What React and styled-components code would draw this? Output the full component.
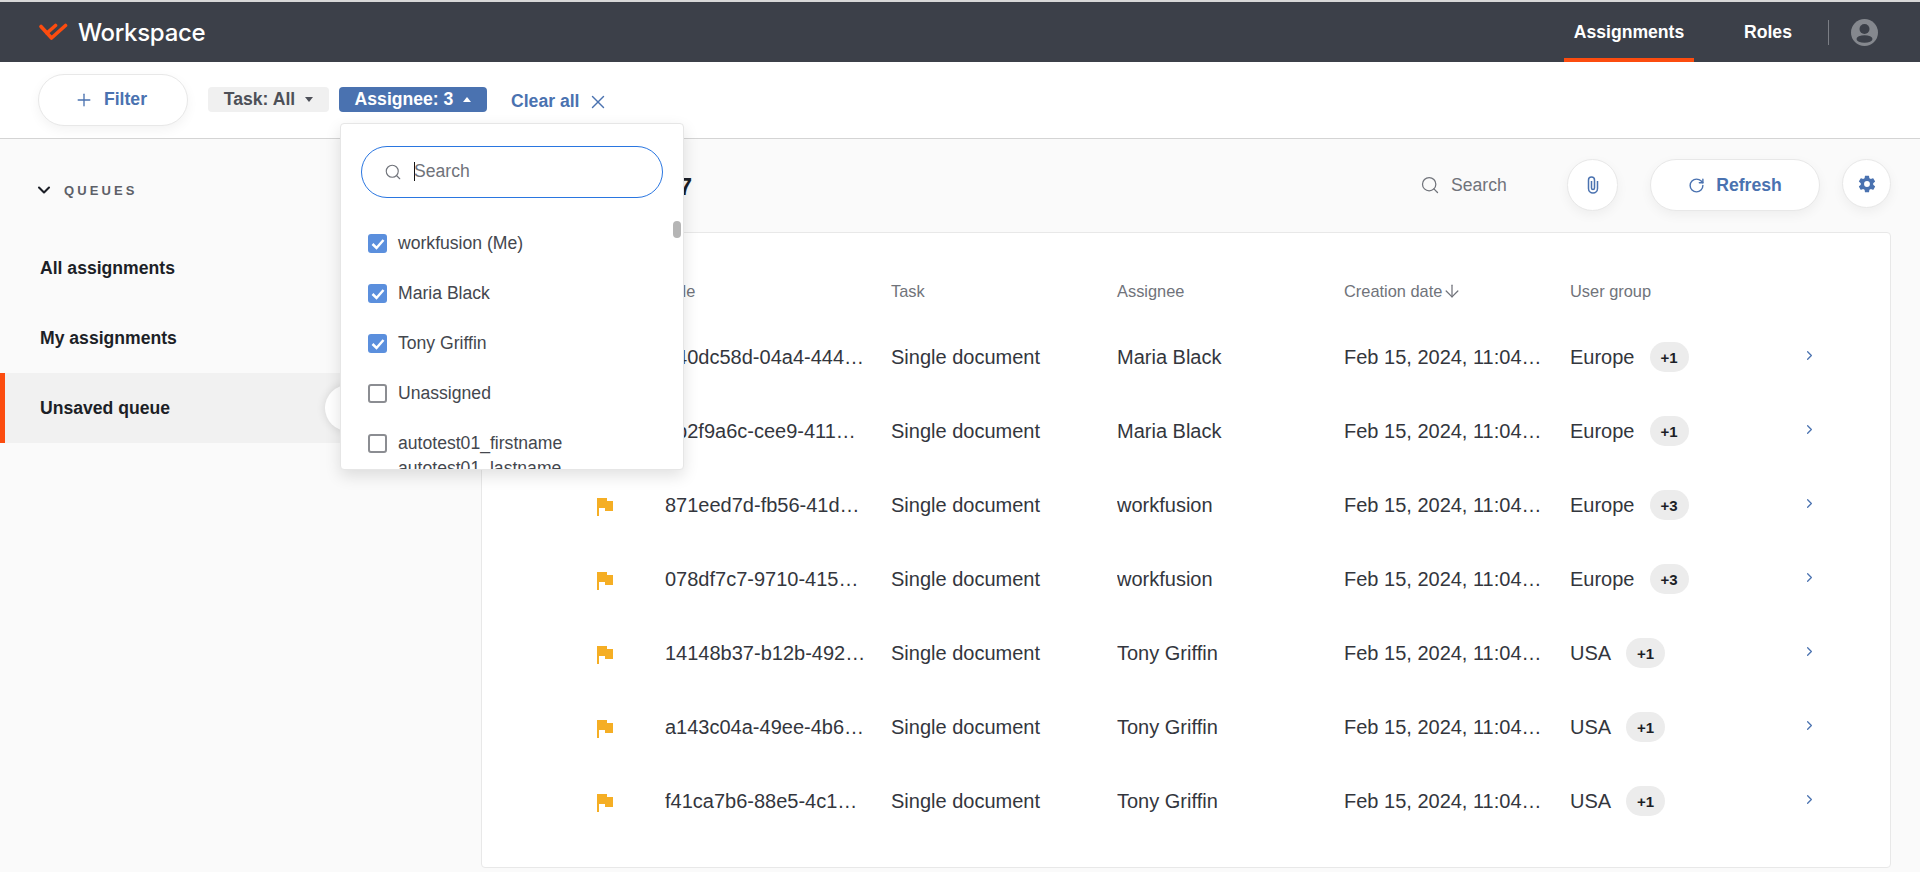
import React from 'react';
import styled, { createGlobalStyle } from 'styled-components';
import { Plus, X, Search, ChevronDown, ChevronRight, RotateCw, ArrowDown } from 'lucide-react';

const GlobalStyle = createGlobalStyle`
  html, body { margin: 0; padding: 0; height: 100%; background: #fafafa; overflow: hidden; }
  * { box-sizing: border-box; }
  body { font-family: "Liberation Sans", Arial, sans-serif; color: #24272e; }
`;

const Page = styled.div`
  position: relative;
  width: 1920px;
  height: 872px;
  display: flex;
  flex-direction: column;
  overflow: hidden;
`;

const TopStrip = styled.div`
  height: 2px;
  background: #d8d8d8;
`;

const Header = styled.header`
  height: 60px;
  background: #3c4049;
  display: flex;
  align-items: stretch;
  justify-content: space-between;
  padding: 0 42px 0 38px;
`;

const Brand = styled.div`
  display: flex;
  align-items: center;
  gap: 10px;
  color: #fff;
  font-family: Inter, "Noto Sans", sans-serif;
  font-size: 24px;
  font-weight: 500;
  letter-spacing: -0.3px;
`;

const HeaderNav = styled.nav`
  display: flex;
  align-items: stretch;
`;

const NavLink = styled.a`
  display: flex;
  align-items: center;
  justify-content: center;
  width: ${p => p.$width}px;
  margin-right: ${p => p.$gap || 0}px;
  color: #fff;
  font-size: 17.6px;
  font-weight: 700;
  box-shadow: ${p => (p.$active ? 'inset 0 -4px 0 #fc4c0f' : 'none')};
`;

const NavDivider = styled.span`
  width: 1px;
  height: 25px;
  margin: 18px 22px 0 0;
  background: #7b7e85;
`;

const Avatar = styled.div`
  display: flex;
  align-items: center;
`;

const FilterBar = styled.div`
  height: 77px;
  flex-shrink: 0;
  background: #fff;
  border-bottom: 1px solid #d4d4d4;
  display: flex;
  align-items: center;
  padding: 0 0 1px 38px;
`;

const RoundButton = styled.button`
  display: flex;
  align-items: center;
  justify-content: center;
  flex-shrink: 0;
  gap: ${p => p.$gap || 0}px;
  width: ${p => p.$width}px;
  height: ${p => p.$height || 52}px;
  padding: 0;
  background: #fff;
  border: 1px solid #e8e8e8;
  border-radius: 26px;
  box-shadow: 0 4px 12px rgba(0, 0, 0, 0.05);
  color: #4a72b0;
  font: 700 17.6px "Liberation Sans", Arial, sans-serif;
`;

const FilterButton = styled(RoundButton)`
  padding-right: 5px;
  margin-right: 20px;
`;

const Chip = styled.button`
  display: flex;
  align-items: center;
  justify-content: center;
  gap: 10px;
  width: ${p => p.$width}px;
  height: 25px;
  margin-right: 10px;
  padding: 0;
  border: 0;
  border-radius: 4px;
  background: ${p => (p.$active ? '#4a72b0' : '#f0f0f0')};
  color: ${p => (p.$active ? '#fff' : '#4d5058')};
  font: 700 17.6px "Liberation Sans", Arial, sans-serif;
`;

const Caret = styled.span`
  width: 0;
  height: 0;
  border-left: 4.5px solid transparent;
  border-right: 4.5px solid transparent;
  ${p => (p.$up ? 'border-bottom: 5px solid currentColor;' : 'border-top: 5px solid currentColor;')}
`;

const ClearAll = styled.a`
  display: flex;
  align-items: center;
  gap: 8px;
  margin: 4px 0 0 14px;
  color: #4a72b0;
  font-size: 17.6px;
  font-weight: 700;
`;

const Body = styled.div`
  flex: 1;
  display: flex;
  min-height: 0;
`;

const Sidebar = styled.aside`
  width: 340px;
  flex-shrink: 0;
  padding-top: 42px;
`;

const QueuesTitle = styled.div`
  display: flex;
  align-items: center;
  gap: 10px;
  height: 18px;
  padding-left: 34px;
  color: #5d6068;
  font-size: 13px;
  font-weight: 700;
  letter-spacing: 3.1px;
`;

const QueueList = styled.div`
  margin-top: 34px;
`;

const QueueItem = styled.div`
  position: relative;
  height: 70px;
  display: flex;
  align-items: center;
  padding-left: ${p => (p.$active ? 35 : 40)}px;
  font-size: 17.6px;
  font-weight: 700;
  color: #1c1f27;
  background: ${p => (p.$active ? '#f1f1f1' : 'transparent')};
  border-left: ${p => (p.$active ? '5px solid #fc4c0f' : '0')};
`;

const QueueKnob = styled.span`
  position: absolute;
  right: -31px;
  top: 12px;
  width: 46px;
  height: 46px;
  border-radius: 50%;
  background: #fff;
  box-shadow: 0 0 10px rgba(0, 0, 0, 0.12);
`;

const Main = styled.main`
  flex: 1;
  min-width: 0;
  padding: 20px 29px 0 141px;
  background: #fafafa;
`;

const Toolbar = styled.div`
  height: 52px;
  display: flex;
  align-items: center;
`;

const Total = styled.h2`
  width: 211px;
  margin: 0 auto 0 0;
  padding-top: 3px;
  text-align: right;
  font-size: 24px;
  font-weight: 700;
  color: #1c1f27;
`;

const ToolbarSearch = styled.div`
  display: flex;
  align-items: center;
  gap: 11px;
  width: 147px;
  margin-left: -3px;
  color: #70737a;
  font-size: 17.6px;
`;

const ToolButtons = styled.div`
  display: flex;
  align-items: flex-start;
  gap: 32px;
`;

const RefreshGroup = styled.div`
  display: flex;
  align-items: flex-start;
  gap: 22px;
`;

const Card = styled.section`
  height: 636px;
  margin-top: 21px;
  background: #fff;
  border: 1px solid #e8e8e8;
  border-radius: 4px;
  padding-top: 42px;
`;

const GridRow = styled.div`
  display: grid;
  grid-template-columns: 183px 226px 226px 227px 226px 1fr;
  height: ${p => p.$height}px;
  margin-bottom: ${p => p.$after || 0}px;
  align-items: center;
`;

const HeadCell = styled.div`
  display: flex;
  align-items: center;
  color: #70737a;
  font-size: 16.4px;
`;

const Cell = styled.div`
  font-size: 20px;
  color: #33363d;
  white-space: nowrap;
  overflow: hidden;
`;

const FlagCell = styled.div`
  display: flex;
  padding: 3px 0 0 115px;
`;

const GroupCell = styled.div`
  display: flex;
  align-items: center;
  gap: 15px;
  font-size: 20px;
  color: #33363d;
`;

const CountBadge = styled.span`
  display: flex;
  align-items: center;
  justify-content: center;
  width: 39px;
  height: 30px;
  border-radius: 15px;
  background: #ececec;
  color: #1c1f27;
  font-size: 15px;
  font-weight: 700;
`;

const GroupLine = styled.div`
  display: grid;
  grid-template-columns: 232px 1fr;
  align-items: center;
  color: #4a72b0;
`;

const RowArrow = styled.span`
  display: flex;
  margin-top: -4px;
`;

const Dropdown = styled.div`
  position: absolute;
  z-index: 10;
  left: 340px;
  top: 123px;
  width: 344px;
  height: 347px;
  background: #fff;
  border: 1px solid #e6e6e6;
  border-radius: 4px;
  box-shadow: 0 6px 16px rgba(0, 0, 0, 0.12);
  overflow: hidden;
`;

const SearchField = styled.div`
  display: flex;
  align-items: center;
  gap: 12px;
  height: 52px;
  margin: 22px 20px 0;
  padding: 0 0 1px 22px;
  border: 1px solid #2a76e0;
  border-radius: 26px;
  color: #70737a;
  font-size: 17.6px;
`;

const TextCaret = styled.span`
  width: 1px;
  height: 19px;
  margin-right: -13px;
  background: #111;
`;

const OptionList = styled.div`
  margin-top: 33px;
  padding-left: 27px;
`;

const Option = styled.div`
  display: flex;
  align-items: flex-start;
  gap: 11px;
  height: 50px;
  color: #44474e;
  font-size: 17.6px;
  line-height: 25px;
`;

const OptionLabel = styled.span`
  width: 200px;
`;

const CheckBox = styled.span`
  display: flex;
  align-items: center;
  justify-content: center;
  flex-shrink: 0;
  width: 19px;
  height: 19px;
  margin-top: 3px;
  border-radius: 3px;
  background: ${p => (p.$checked ? '#5b8fdd' : '#fff')};
  border: ${p => (p.$checked ? '0' : '2px solid #8b8d92')};
`;

const ScrollThumb = styled.span`
  position: absolute;
  right: 2px;
  top: 97px;
  width: 8px;
  height: 17px;
  border-radius: 4px;
  background: #b5b5b5;
`;

const LogoMark = () => (
  <svg width="30" height="18" viewBox="0 0 30 18" fill="none" stroke="#fc4c0f" strokeWidth="3.6" strokeLinecap="round" strokeLinejoin="round">
    <path d="M3 3.5 L13.5 15 L27.5 2.5" />
    <path d="M9 10 L17.5 2.5" />
  </svg>
);

const UserIcon = () => (
  <svg width="27" height="27" viewBox="0 0 27 27">
    <circle cx="13.5" cy="13.5" r="13.5" fill="#85888e" />
    <circle cx="13.5" cy="10" r="5" fill="#3c4049" />
    <ellipse cx="13.5" cy="20" rx="8" ry="3.8" fill="#3c4049" />
  </svg>
);

const GearIcon = () => (
  <svg width="20" height="20" viewBox="0 0 24 24" fill="#4a72b0">
    <path d="M19.4 13c.04-.33.1-.66.1-1s-.06-.67-.1-1l2.1-1.65c.19-.15.24-.42.12-.64l-2-3.46c-.12-.22-.39-.3-.61-.22l-2.49 1c-.52-.4-1.08-.73-1.69-.98l-.38-2.65A.49.49 0 0 0 14 2h-4c-.25 0-.46.18-.49.42l-.38 2.65c-.61.25-1.17.59-1.69.98l-2.49-1a.5.5 0 0 0-.61.22l-2 3.46c-.13.22-.07.49.12.64L4.57 11c-.04.33-.07.66-.07 1s.03.67.07 1l-2.11 1.65c-.19.15-.24.42-.12.64l2 3.46c.12.22.39.3.61.22l2.49-1c.52.4 1.08.73 1.69.98l.38 2.65c.03.24.24.42.49.42h4c.25 0 .46-.18.49-.42l.38-2.65c.61-.25 1.17-.59 1.69-.98l2.49 1c.22.08.49 0 .61-.22l2-3.46c.12-.22.07-.49-.12-.64L19.4 13zM12 15.5a3.5 3.5 0 1 1 0-7 3.5 3.5 0 0 1 0 7z" />
  </svg>
);

const ClipIcon = () => (
  <svg width="12" height="18" viewBox="0 0 12 18" fill="none" stroke="#4a72b0" strokeWidth="1.5">
    <path d="M10.5 5 V12.5 A4.5 4.5 0 0 1 1.5 12.5 V4 A3 3 0 0 1 7.5 4 V12 A1.5 1.5 0 0 1 4.5 12 V5" />
  </svg>
);

const FlagIcon = () => (
  <svg width="16" height="18" viewBox="0 0 16 18">
    <path d="M0 0 H10 V3 H16 V13 H8 V10 H2 V18 H0 Z" fill="#f5ae24" />
  </svg>
);

const CheckMark = () => (
  <svg width="14" height="12" viewBox="0 0 14 12">
    <path d="M1.5 6 L5.5 10 L12.5 2" fill="none" stroke="#fff" strokeWidth="2.5" />
  </svg>
);

const rows = [
  { id: '840dc58d-04a4-444…', assignee: 'Maria Black', group: 'Europe', extra: '+1', flag: false },
  { id: '7b2f9a6c-cee9-411…', assignee: 'Maria Black', group: 'Europe', extra: '+1', flag: false },
  { id: '871eed7d-fb56-41d…', assignee: 'workfusion', group: 'Europe', extra: '+3', flag: true },
  { id: '078df7c7-9710-415…', assignee: 'workfusion', group: 'Europe', extra: '+3', flag: true },
  { id: '14148b37-b12b-492…', assignee: 'Tony Griffin', group: 'USA', extra: '+1', flag: true },
  { id: 'a143c04a-49ee-4b6…', assignee: 'Tony Griffin', group: 'USA', extra: '+1', flag: true },
  { id: 'f41ca7b6-88e5-4c1…', assignee: 'Tony Griffin', group: 'USA', extra: '+1', flag: true },
];

const options = [
  { label: 'workfusion (Me)', checked: true },
  { label: 'Maria Black', checked: true },
  { label: 'Tony Griffin', checked: true },
  { label: 'Unassigned', checked: false },
  { label: 'autotest01_firstname autotest01_lastname', checked: false },
];

export default function App() {
  return (
    <Page>
      <GlobalStyle />
      <TopStrip />
      <Header>
        <Brand><LogoMark />Workspace</Brand>
        <HeaderNav>
          <NavLink $active $width={130} $gap={29}>Assignments</NavLink>
          <NavLink $width={90} $gap={15}>Roles</NavLink>
          <NavDivider />
          <Avatar><UserIcon /></Avatar>
        </HeaderNav>
      </Header>

      <FilterBar>
        <FilterButton $width={150} $gap={10}><Plus size={20} strokeWidth={1.6} />Filter</FilterButton>
        <Chip $width={121}>Task: All<Caret /></Chip>
        <Chip $active $width={148}>Assignee: 3<Caret $up /></Chip>
        <ClearAll>Clear all<X size={22} strokeWidth={1.5} /></ClearAll>
      </FilterBar>

      <Body>
        <Sidebar>
          <QueuesTitle><ChevronDown size={20} color="#1c1f27" strokeWidth={2.5} />QUEUES</QueuesTitle>
          <QueueList>
            <QueueItem>All assignments</QueueItem>
            <QueueItem>My assignments</QueueItem>
            <QueueItem $active>Unsaved queue<QueueKnob /></QueueItem>
          </QueueList>
        </Sidebar>
        <Main>
          <Toolbar>
            <Total>7</Total>
            <ToolbarSearch><Search size={20} strokeWidth={1.5} />Search</ToolbarSearch>
            <ToolButtons>
              <RoundButton $width={51}><ClipIcon /></RoundButton>
              <RefreshGroup>
                <RoundButton $width={170} $gap={11}><RotateCw size={17} />Refresh</RoundButton>
                <RoundButton $width={49} $height={49}><GearIcon /></RoundButton>
              </RefreshGroup>
            </ToolButtons>
          </Toolbar>
          <Card>
            <GridRow $height={32} $after={13}>
              <div />
              <HeadCell>Title</HeadCell>
              <HeadCell>Task</HeadCell>
              <HeadCell>Assignee</HeadCell>
              <HeadCell>Creation date<ArrowDown size={20} strokeWidth={1.5} /></HeadCell>
              <HeadCell>User group</HeadCell>
            </GridRow>
            {rows.map(r => (
              <GridRow key={r.id} $height={74}>
                <FlagCell>{r.flag && <FlagIcon />}</FlagCell>
                <Cell>{r.id}</Cell>
                <Cell>Single document</Cell>
                <Cell>{r.assignee}</Cell>
                <Cell>Feb 15, 2024, 11:04…</Cell>
                <GroupLine>
                  <GroupCell>{r.group}<CountBadge>{r.extra}</CountBadge></GroupCell>
                  <RowArrow><ChevronRight size={15} /></RowArrow>
                </GroupLine>
              </GridRow>
            ))}
          </Card>
        </Main>
      </Body>

      <Dropdown>
        <SearchField><Search size={18} strokeWidth={1.5} /><TextCaret />Search</SearchField>
        <OptionList>
          {options.map(o => (
            <Option key={o.label}>
              <CheckBox $checked={o.checked}>{o.checked && <CheckMark />}</CheckBox>
              <OptionLabel>{o.label}</OptionLabel>
            </Option>
          ))}
        </OptionList>
        <ScrollThumb />
      </Dropdown>
    </Page>
  );
}
